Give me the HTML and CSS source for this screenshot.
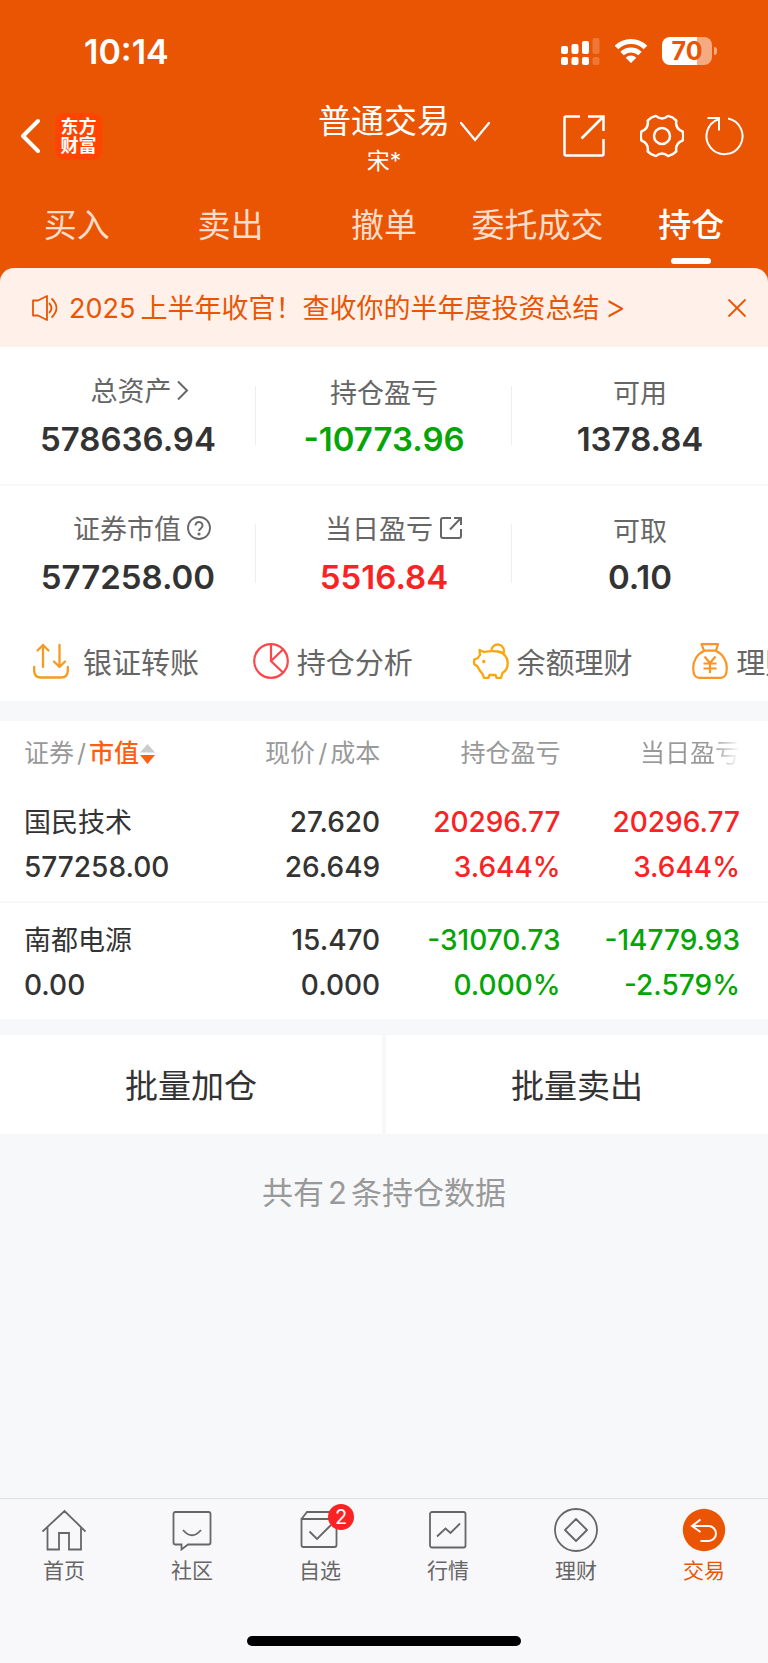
FILE: index.html
```html
<!DOCTYPE html>
<html lang="zh-CN">
<head>
<meta charset="utf-8">
<meta name="viewport" content="width=device-width, initial-scale=1">
<title>普通交易 - 持仓</title>
<link rel="stylesheet" href="styles.css">
</head>
<body>
<header class="header">
  <div class="status">
    <span class="status-time">10:14</span>
    <div class="status-icons">
      <svg width="39" height="28" viewBox="0 0 39 28" fill="#fff" aria-hidden="true">
        <rect x="0" y="9" width="7" height="8" rx="2"/><rect x="10.500" y="7" width="7" height="10" rx="2"/><rect x="21" y="4" width="7" height="13" rx="2"/><rect x="31.500" y="1" width="7" height="16" rx="2" opacity=".2"/>
        <rect x="0" y="20" width="7" height="8" rx="2"/><rect x="10.500" y="20" width="7" height="8" rx="2"/><rect x="21" y="20" width="7" height="8" rx="2"/><rect x="31.500" y="20" width="7" height="8" rx="2" opacity=".2"/>
      </svg>
      <svg width="34" height="26" viewBox="0 0 34 26" fill="none" stroke="#fff" stroke-width="5" aria-hidden="true">
        <path d="M2.500 9.500a20.500 20.500 0 0 1 29 0"/><path d="M8 15.500a13 13 0 0 1 18 0"/><path d="M17 25l-5.300-5.300a7.500 7.500 0 0 1 10.600 0z" fill="#fff" stroke="none"/>
      </svg>
      <div class="battery"><span class="battery-level">70</span></div>
    </div>
  </div>
  <div class="titlebar">
    <div class="titlebar-left">
      <button class="icon-btn" aria-label="返回">
        <svg width="20" height="36" viewBox="0 0 20 36" fill="none" stroke="#fff" stroke-width="4" stroke-linecap="round" stroke-linejoin="round"><path d="M18 3L3 18l15 15"/></svg>
      </button>
      <a class="logo" href="#"><span>东方</span><span>财富</span></a>
    </div>
    <div class="titlebar-center">
      <h1 class="title">普通交易</h1>
      <button class="icon-btn title-arrow" aria-label="切换账户">
        <svg width="30" height="20" viewBox="0 0 30 20" fill="none" stroke="#fff" stroke-width="2.300" stroke-linecap="round"><path d="M1 1l14 17L29 1"/></svg>
      </button>
      <p class="subtitle">宋*</p>
    </div>
    <div class="titlebar-right">
      <button class="icon-btn" aria-label="分享">
        <svg width="44" height="44" viewBox="0 0 44 44" fill="none" stroke="#fff" stroke-width="2.500"><path d="M18 2.500H4Q2.500 2.500 2.500 4v36q0 1.500 1.500 1.500h36q1.500 0 1.500-1.500V25M26 2.500h15.500V17M41 3L19.500 24.500"/></svg>
      </button>
      <button class="icon-btn gear" aria-label="设置">
        <svg width="44" height="44" viewBox="-22 -22 44 44" fill="none" stroke="#fff" stroke-width="2.500" stroke-linejoin="round"><path d="M20.500 4.700Q13 7.500 14.300 15.400Q11 19 6.100 20.100Q0 15-6.100 20.100Q-11 19-14.300 15.400Q-13 7.500-20.500 4.700Q-22 0-20.500-4.700Q-13-7.500-14.300-15.400Q-11-19-6.100-20.100Q0-15 6.100-20.100Q11-19 14.300-15.400Q13-7.500 20.500-4.700Q22 0 20.500 4.700z"/><circle r="8"/></svg>
      </button>
      <button class="icon-btn" aria-label="刷新">
        <svg width="40" height="40" viewBox="0 0 40 40" fill="none" stroke="#fff" stroke-width="2"><path d="M24 2.500A18 18 0 1 1 14.500 3.200M3.500 2h11.500v12.500"/></svg>
      </button>
    </div>
  </div>
  <nav class="tabs">
    <a class="tab" href="#">买入</a>
    <a class="tab" href="#">卖出</a>
    <a class="tab" href="#">撤单</a>
    <a class="tab" href="#">委托成交</a>
    <a class="tab tab-active" href="#" aria-current="page">持仓</a>
  </nav>
</header>

<main class="main">
  <div class="banner-wrap">
    <div class="banner">
      <svg width="28" height="28" viewBox="0 0 28 28" fill="none" stroke="#ea5504" stroke-width="1.800" stroke-linejoin="round" aria-hidden="true"><path d="M2 6.500h5L16 2v24l-9-4.500H2zM18 9q5 5 0 10M20.500 4.500q10 9.500 0 19"/></svg>
      <a class="banner-text" href="#"><span class="banner-year">2025</span>上半年收官！查收你的半年度投资总结<span class="banner-more">&gt;</span></a>
      <button class="icon-btn" aria-label="关闭">
        <svg width="20" height="20" viewBox="0 0 20 20" stroke="#ea5504" stroke-width="1.800"><path d="M1.500 1.500l17 17M18.500 1.500l-17 17"/></svg>
      </button>
    </div>
  </div>

  <section class="stats">
    <div class="stat">
      <div class="stat-label label-arrow">总资产<svg width="20" height="22" viewBox="0 0 20 22" fill="none" stroke="#666" stroke-width="2"><path d="M6 2.500l9 9-9 9"/></svg></div>
      <div class="stat-value">578636.94</div>
    </div>
    <div class="stat">
      <div class="stat-label">持仓盈亏</div>
      <div class="stat-value down">-10773.96</div>
    </div>
    <div class="stat">
      <div class="stat-label">可用</div>
      <div class="stat-value">1378.84</div>
    </div>
  </section>
  <section class="stats">
    <div class="stat">
      <div class="stat-label label-help">证券市值<svg width="24" height="24" viewBox="0 0 24 24" fill="none" stroke="#666" stroke-width="1.800"><circle cx="12" cy="12" r="11"/><path d="M8.500 9.500a3.500 3.500 0 1 1 5.500 2.800q-2 1.200-2 2.700" stroke-width="2"/><circle cx="12" cy="18" r=".7"/></svg></div>
      <div class="stat-value">577258.00</div>
    </div>
    <div class="stat">
      <div class="stat-label label-share">当日盈亏<svg width="24" height="24" viewBox="0 0 24 24" fill="none" stroke="#666" stroke-width="2"><path d="M12 2H4Q2 2 2 4v16q0 2 2 2h16q2 0 2-2v-7M15 2h7v7M22 2L11 13.500"/></svg></div>
      <div class="stat-value up">5516.84</div>
    </div>
    <div class="stat">
      <div class="stat-label">可取</div>
      <div class="stat-value">0.10</div>
    </div>
  </section>

  <nav class="shortcuts">
    <a class="shortcut shortcut-wide" href="#">
      <svg width="36" height="36" viewBox="0 0 36 36" fill="none" stroke="#f59a23" stroke-width="2.300" stroke-linecap="round" stroke-linejoin="round"><path d="M1.200 24v3.500q0 7 7 7h19.600q7 0 7-7V24M10 24V2M4.500 7.500L10 2l5.500 5.500M26.500 2v22M21 18.500l5.500 5.500 5.500-5.500"/></svg>
      银证转账
    </a>
    <a class="shortcut" href="#">
      <svg width="36" height="36" viewBox="0 0 36 36" fill="none" stroke="#fc464c" stroke-width="2.200"><circle cx="18" cy="18" r="16.800"/><path d="M18 1v17l12 11.500M18 18L30 6.500"/></svg>
      持仓分析
    </a>
    <a class="shortcut" href="#">
      <svg width="36" height="36" viewBox="0 0 36 36" fill="none" stroke="#fda60b" stroke-width="2.300" stroke-linejoin="round"><path d="M6.500 7l4.500 2q7-1.500 14-.500c6 1 9.700 6 9.700 11.500 0 5-2.700 8.500-5.200 10l-1.500 4.800h-4.500L22.500 32h-6l-1 2.800H11L9.500 31Q6 27 4.500 23.500L1.200 21v-4.500L5 15q1-2 2-3z"/><path d="M18.300 7.500a6.300 6.300 0 1 1 12.200 2.500"/><circle cx="10.800" cy="18.500" r="1.700" fill="#fda60b" stroke="none"/></svg>
      余额理财
    </a>
    <a class="shortcut" href="#">
      <svg width="36" height="36" viewBox="0 0 36 36" fill="none" stroke="#fb9422" stroke-width="2.200" stroke-linejoin="round"><path d="M9.500 1.200h16.500l-2 6.500H12zM12 8C5 11 1.200 18 1.200 25c0 6.500 2.500 9.800 6 9.800h21.600c3.500 0 6-3.300 6-9.800C34.800 18 31 11 24 8"/><path d="M12.500 13.500l5.500 6.500 5.500-6.500M18 20v10M11.500 20.500h13M11.500 25.500h13"/></svg>
      理财
    </a>
  </nav>

  <table class="holdings">
    <colgroup><col class="col-name"><col class="col-price"><col class="col-profit"><col class="col-today"></colgroup>
    <thead>
      <tr>
        <th scope="col">证券<span class="slash">/</span><span class="sorted">市值</span><svg class="sort" width="15" height="22" viewBox="0 0 15 22"><path d="M0 9.500L7.500 1 15 9.500z" fill="#ccc"/><path d="M0 12h15l-7.500 9z" fill="#ff6010"/></svg></th>
        <th scope="col">现价<span class="slash">/</span>成本</th>
        <th scope="col">持仓盈亏</th>
        <th scope="col"><span class="fade">当日盈亏</span></th>
      </tr>
    </thead>
    <tbody>
      <tr>
        <td><span class="line name">国民技术</span><span class="line">577258.00</span></td>
        <td><span class="line">27.620</span><span class="line">26.649</span></td>
        <td class="up"><span class="line">20296.77</span><span class="line">3.644%</span></td>
        <td class="up"><span class="line">20296.77</span><span class="line">3.644%</span></td>
      </tr>
      <tr>
        <td><span class="line name">南都电源</span><span class="line">0.00</span></td>
        <td><span class="line">15.470</span><span class="line">0.000</span></td>
        <td class="down"><span class="line">-31070.73</span><span class="line">0.000%</span></td>
        <td class="down"><span class="line">-14779.93</span><span class="line">-2.579%</span></td>
      </tr>
    </tbody>
  </table>

  <div class="actions">
    <button class="action">批量加仓</button>
    <button class="action">批量卖出</button>
  </div>
  <p class="summary">共有<span class="count">2</span>条持仓数据</p>
</main>

<footer class="footer">
  <nav class="bottom-nav">
    <a class="nav-item" href="#">
      <span class="nav-icon"><svg width="44" height="44" viewBox="0 0 44 44" fill="none" stroke="#666" stroke-width="1.800"><path d="M.500 23.500L22.500 3l21 20.500M5.500 19.500v22H17V25h10v16.500h12v-22"/></svg></span>首页</a>
    <a class="nav-item" href="#">
      <span class="nav-icon"><svg width="44" height="44" viewBox="0 0 44 44" fill="none" stroke="#666" stroke-width="1.800"><path d="M5.500 4h33q2 0 2 2v28.500q0 2-2 2H18L11.500 41.500v-5h-6q-2 0-2-2V6q0-2 2-2z"/><path d="M13 22q9 10.500 18 0"/></svg></span>社区</a>
    <a class="nav-item" href="#">
      <span class="nav-icon"><svg width="44" height="44" viewBox="0 0 44 44" fill="none" stroke="#666" stroke-width="1.800"><path d="M3.500 11v26q0 2 2 2h31q2 0 2-2V11zL9 4h25l4.500 7M11.500 23.500L19 31l14-14"/></svg><span class="badge">2</span></span>自选</a>
    <a class="nav-item" href="#">
      <span class="nav-icon"><svg width="44" height="44" viewBox="0 0 44 44" fill="none" stroke="#666" stroke-width="1.800"><rect x="4" y="4" width="35.500" height="35.500" rx="2"/><path d="M11 28.500l8.500-8 5 4.500 9.500-9.500"/></svg></span>行情</a>
    <a class="nav-item" href="#">
      <span class="nav-icon"><svg width="44" height="44" viewBox="0 0 44 44" fill="none" stroke="#666" stroke-width="1.800" stroke-linejoin="round"><circle cx="22" cy="22" r="21"/><path d="M22 11l11 11-11 11-11-11z"/></svg></span>理财</a>
    <a class="nav-item nav-active" href="#" aria-current="page">
      <span class="nav-icon"><svg width="44" height="44" viewBox="0 0 44 44" fill="none" stroke="#fff" stroke-width="2"><circle cx="22" cy="22" r="21.200" fill="#ea5504" stroke="none"/><path d="M18.500 11.500L10 18l8.500 6M10 18h16.500a7.500 7.500 0 0 1 0 15h-8"/></svg></span>交易</a>
  </nav>
  <div class="home-bar"></div>
</footer>
</body>
</html>
```
FILE: styles.css
```css
* { box-sizing: border-box; }

body {
  margin: 0;
  min-height: 100vh;
  display: flex;
  flex-direction: column;
  background: #f7f8fa;
  color: #333;
  font-family: Inter, "Noto Sans CJK SC", sans-serif;
  font-size: 27px;
  overflow-x: hidden;
}

a { color: inherit; text-decoration: none; }
svg { display: block; flex: none; }
h1, p { margin: 0; font-weight: 400; }
button { font: inherit; color: inherit; border: 0; padding: 0; background: none; cursor: pointer; }
.icon-btn { display: flex; flex: none; }

.up { color: #fa2223; }
.down { color: #06a506; }

/* Header */
.header { background: #ea5504; color: #fff; }
.status {
  display: flex;
  justify-content: space-between;
  align-items: center;
  height: 96px;
  padding: 6px 51px 0 84px;
}
.status-time { font-size: 34px; font-weight: 600; }
.status-icons { display: flex; align-items: center; gap: 14px; }
.battery { display: flex; align-items: center; gap: 2px; }
.battery-level {
  width: 50px;
  height: 28px;
  border-radius: 8px;
  background: linear-gradient(90deg, #fff 70%, #f5aa82 70%);
  color: #ea5504;
  font-size: 25px;
  font-weight: 700;
  line-height: 28px;
  text-align: center;
}
.battery::after { content: ""; width: 3px; height: 8px; border-radius: 0 4px 4px 0; background: #f5aa82; }

.titlebar {
  display: grid;
  grid-template-columns: 1fr auto 1fr;
  align-items: center;
  height: 80px;
  padding: 0 24px 0 20px;
}
.titlebar-left { display: flex; align-items: center; gap: 15px; }
.logo {
  display: flex;
  flex-direction: column;
  justify-content: center;
  align-items: center;
  width: 47px;
  height: 47px;
  border-radius: 9px;
  background: #ff4400;
  font-size: 18px;
  font-weight: 700;
  line-height: 19px;
}
.titlebar-center {
  display: grid;
  grid-template-columns: 34px auto 30px;
  column-gap: 10px;
  align-items: center;
}
.title { grid-column: 2; font-size: 33px; line-height: 50px; }
.title-arrow { padding-top: 22px; }
.subtitle { grid-column: 2; font-size: 23px; line-height: 30px; text-align: center; }
.titlebar-right { display: flex; align-items: center; justify-content: flex-end; }
.gear { margin: 0 20px 0 34px; }

.tabs { display: flex; }
.tab {
  flex: 1;
  height: 92px;
  padding-top: 24px;
  font-size: 33px;
  line-height: 50px;
  text-align: center;
  color: #fcdccb;
}
.tab-active { color: #fff; font-weight: 500; }
.tab-active::after {
  content: "";
  display: block;
  width: 40px;
  height: 6px;
  margin: 8px auto 0;
  border-radius: 3px;
  background: #fff;
}

/* Notice */
.banner-wrap { background: #ea5504; }
.banner {
  display: flex;
  align-items: center;
  height: 79px;
  padding: 0 21px 0 31px;
  border-radius: 14px 14px 0 0;
  background: #fff1ea;
  color: #ea5504;
}
.banner-text { flex: 1; padding: 0 0 2px 10px; white-space: nowrap; }
.banner-year { margin-right: 5px; }
.banner-more { margin-left: 5px; font-size: 33px; font-weight: 300; line-height: 1; }

/* Account figures */
.main { flex: 1; }
.stats { display: flex; background: #fff; }
.stats + .stats { border-top: 2px solid #f7f8fa; }
.stat {
  flex: 1;
  height: 137px;
  padding-top: 26px;
  text-align: center;
  background: linear-gradient(#eee, #eee) right 39px / 1px 59px no-repeat;
}
.stats + .stats .stat { padding-top: 25px; background-position: right 38px; }
.stat:last-child { background: none; }
.stat-label {
  display: flex;
  justify-content: center;
  align-items: center;
  gap: 6px;
  height: 36px;
  margin-bottom: 8px;
  color: #666;
}
.label-arrow, .label-help, .label-share { padding-bottom: 3px; }
.label-arrow { gap: 0; padding-left: 26px; }
.label-help { padding-left: 28px; }
.label-share { padding-left: 20px; }
.stat-value { font-size: 33px; font-weight: 600; line-height: 44px; }

/* Shortcuts */
.shortcuts {
  display: flex;
  height: 78px;
  padding: 0 0 2px 33px;
  overflow: hidden;
  background: #fff;
}
.shortcut {
  display: flex;
  flex: 0 0 29.9%;
  align-items: center;
  gap: 8px;
  color: #666;
  font-size: 29px;
  white-space: nowrap;
}
.shortcut-wide { gap: 14px; }

/* Holdings */
.holdings {
  width: 100%;
  margin: 20px 0 16px;
  table-layout: fixed;
  border-collapse: collapse;
  background: #fff;
  text-align: right;
}
.col-name { width: 27%; }
.col-price { width: 22.5%; }
.col-profit { width: 23.5%; }
.col-today { width: 27%; }
th {
  height: 64px;
  padding: 0 0 4px;
  color: #999;
  font-size: 25px;
  font-weight: 400;
  white-space: nowrap;
}
td { padding: 15px 0 11px; font-size: 28px; font-weight: 500; }
th:first-child, td:first-child { padding-left: 24px; text-align: left; }
th:last-child, td:last-child { padding-right: 28px; }
tbody tr + tr { border-top: 2px solid #f7f8fa; }
.line { display: block; line-height: 45px; }
.name { font-size: 27px; font-weight: 400; }
.slash { margin: 0 3px; }
.sorted { color: #ff6010; font-weight: 500; }
.sort { display: inline-block; margin-left: 1px; vertical-align: -3px; }
.fade {
  color: transparent;
  background: linear-gradient(90deg, #999 72%, #fff);
  background-clip: text;
  -webkit-background-clip: text;
}

.actions { display: flex; gap: 4px; }
.action { flex: 1; height: 99px; padding-bottom: 2px; background: #fff; font-size: 33px; }
.summary { padding-top: 35px; font-size: 31px; line-height: 48px; text-align: center; color: #999; }
.count { margin: 0 4px; }

/* Bottom navigation */
.footer { height: 165px; border-top: 1px solid #dfe0e2; background: #f8f8fb; }
.bottom-nav { display: flex; }
.nav-item {
  display: flex;
  flex: 1;
  flex-direction: column;
  align-items: center;
  gap: 4px;
  padding-top: 9px;
  color: #666;
  font-size: 21px;
  line-height: 30px;
}
.nav-icon { position: relative; }
.nav-active { color: #ea5504; }
.badge {
  position: absolute;
  top: -4px;
  right: -12px;
  width: 26px;
  height: 26px;
  border-radius: 50%;
  background: #fa2223;
  color: #fff;
  font-size: 20px;
  line-height: 26px;
  text-align: center;
}
.home-bar { width: 274px; height: 10px; margin: 50px auto 0; border-radius: 5px; background: #000; }
```
